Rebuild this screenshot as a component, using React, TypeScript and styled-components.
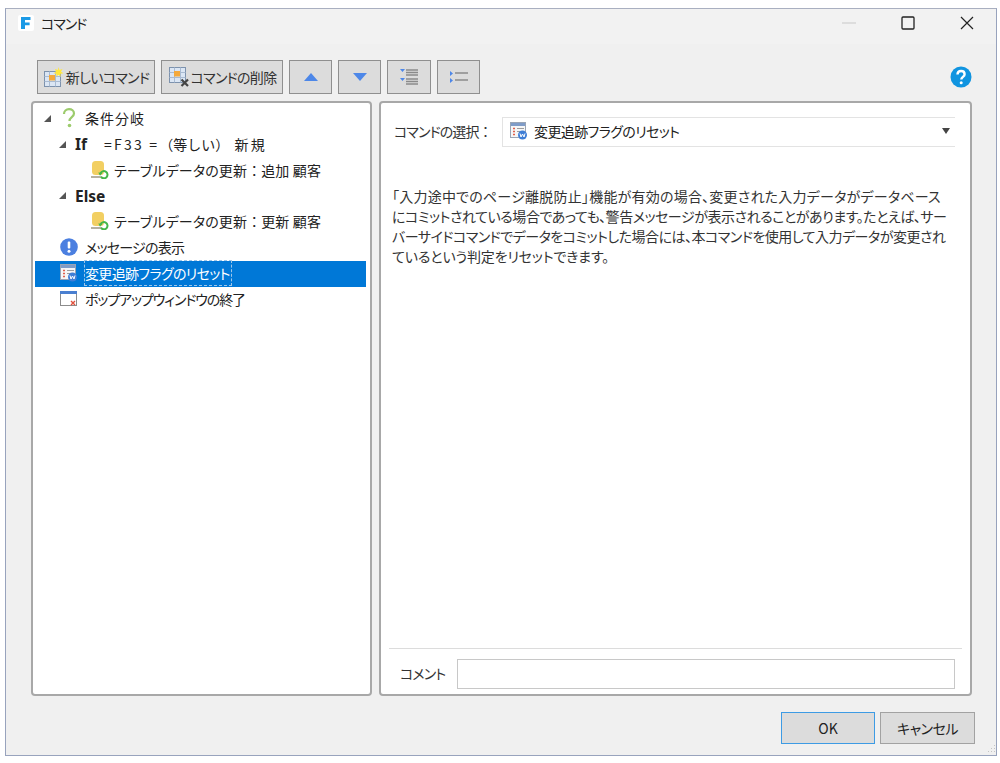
import React from 'react';
import styled, { createGlobalStyle } from 'styled-components';

const GlobalStyle = createGlobalStyle`
  html, body {
    margin: 0;
    padding: 0;
    background: #fff;
    font-family: "Noto Sans CJK JP", "Noto Sans", sans-serif;
    font-size: 14px;
    font-feature-settings: "palt";
    color: #222;
  }
`;

const Page = styled.div`
  width: 1000px;
  height: 763px;
  padding: 8px 3px 7px 5px;
  box-sizing: border-box;
`;

const Window = styled.div`
  height: 100%;
  box-sizing: border-box;
  border: 1px solid #98a3bd;
  border-top-color: #a9afc0;
  background: #f0f0f0;
  display: flex;
  flex-direction: column;
  position: relative;
`;

const TitleBar = styled.div`
  height: 35px;
  flex: none;
  box-sizing: border-box;
  background: #f2f2f2;
  display: flex;
  align-items: center;
  padding: 0 0 7px 12px;
`;

const AppIcon = styled.div`
  width: 16px;
  height: 16px;
  background: #fff;
  border-radius: 2px;
  display: flex;
  align-items: center;
  justify-content: center;
`;

const TitleText = styled.span`
  margin-left: 7px;
  font-size: 14px;
  letter-spacing: -1px;
  color: #222;
`;

const WindowControls = styled.div`
  margin-left: auto;
  display: flex;
  align-items: center;
`;

const ControlBtn = styled.div`
  width: 59px;
  height: 28px;
  display: flex;
  align-items: center;
  justify-content: center;
`;

const Toolbar = styled.div`
  height: 34px;
  margin: 16px 0 0 31px;
  flex: none;
  display: flex;
  align-items: stretch;
  gap: 6px;
  width: 935px;
`;

const ToolBtn = styled.button<{ $w: number }>`
  width: ${p => p.$w}px;
  box-sizing: border-box;
  padding: 0;
  border: 1px solid #8f8f8f;
  background: #dcdcdc;
  font: inherit;
  font-feature-settings: "palt";
  font-size: 14px;
  letter-spacing: -0.7px;
  color: #333;
  display: flex;
  align-items: center;
  justify-content: center;
  gap: 2px;
  white-space: nowrap;
`;

const HelpSlot = styled.div`
  margin-left: auto;
  display: flex;
  align-items: center;
`;

const Panels = styled.div`
  margin: 7px 0 0 25px;
  height: 595px;
  flex: none;
  display: flex;
  gap: 7px;
`;

const Panel = styled.div<{ $w: number }>`
  width: ${p => p.$w}px;
  flex: none;
  box-sizing: border-box;
  background: #fff;
  border: 2px solid #a8a8a8;
  border-radius: 4px;
  display: flex;
  flex-direction: column;
`;

const Tree = styled.div`
  padding: 2.6px 4px 0 2px;
`;

const Row = styled.div<{ $indent: number; $selected?: boolean; $track?: number }>`
  height: 25.9px;
  box-sizing: border-box;
  display: flex;
  align-items: center;
  padding: 0 0 1.5px ${p => p.$indent}px;
  background: ${p => (p.$selected ? '#0078d7' : 'transparent')};
  color: ${p => (p.$selected ? '#fff' : '#222')};
  white-space: nowrap;
  font-size: 14px;
  letter-spacing: ${p => p.$track ?? 0}px;
`;

const Expander = styled.span`
  width: 0;
  height: 0;
  margin: 1px 9px 0 0;
  flex: none;
  border-style: solid;
  border-width: 0 0 7px 7px;
  border-color: transparent transparent #555 transparent;
`;

const RowIcon = styled.span<{ $gap?: number }>`
  width: 18px;
  height: 18px;
  flex: none;
  display: flex;
  align-items: center;
  justify-content: center;
  margin-right: ${p => p.$gap ?? 7}px;
`;

const Bold = styled.b`
  font-family: "Noto Sans", sans-serif;
  font-weight: 700;
  font-size: 15.5px;
  padding-top: 1px;
`;

const IfExpr = styled.span`
  margin-left: 17px;
  padding-top: 1px;
  letter-spacing: 2.2px;
`;

// keeps full-width punctuation, which palt would otherwise squeeze
const WidePunct = styled.span`
  font-feature-settings: normal;
  letter-spacing: 0;
`;

const FocusLabel = styled.span`
  outline: 1px dashed #9fc6e8;
  padding-right: 1px;
  line-height: 24px;
`;

const SelectRow = styled.div`
  margin: 14px 15px 0 13px;
  display: flex;
  align-items: center;
  flex: none;
`;

const FieldLabel = styled.span`
  font-size: 14px;
  letter-spacing: -0.9px;
  color: #333;
  white-space: nowrap;
  padding-bottom: 2px;
`;

const SelectBox = styled.div`
  margin-left: auto;
  width: 453px;
  height: 30px;
  box-sizing: border-box;
  border: 1px solid #e3e3e3;
  border-right: none;
  display: flex;
  align-items: center;
  padding: 0 5px 2px 7px;
  font-size: 14px;
  letter-spacing: -0.6px;
  color: #222;
`;

const Caret = styled.span`
  margin-left: auto;
  width: 0;
  height: 0;
  border-style: solid;
  border-width: 6px 4px 0 4px;
  border-color: #444 transparent transparent transparent;
`;

const Description = styled.div`
  margin: 39px 12px 0 11px;
  flex: 1;
  font-size: 14px;
  line-height: 20px;
  color: #333;
  white-space: nowrap;
`;

const DescLine = styled.div<{ $track: number }>`
  letter-spacing: ${p => p.$track}px;
`;

const CommentRow = styled.div`
  margin: 0 8px 5px 8px;
  height: 41px;
  box-sizing: border-box;
  border-top: 1px solid #dcdcdc;
  padding: 10px 7px 0 11px;
  display: flex;
  align-items: center;
  flex: none;
`;

const CommentInput = styled.div`
  margin-left: auto;
  width: 498px;
  height: 30px;
  box-sizing: border-box;
  border: 1px solid #c8c8c8;
  background: #fff;
`;

const Footer = styled.div`
  margin: 16px 21px 0 0;
  display: flex;
  justify-content: flex-end;
  gap: 5px;
`;

const DialogBtn = styled.button<{ $primary?: boolean }>`
  width: ${p => (p.$primary ? 94 : 95)}px;
  height: 32px;
  box-sizing: border-box;
  padding: 0;
  background: #dcdcdc;
  border: 1px solid ${p => (p.$primary ? '#3d9be4' : '#a2a2a2')};
  font: inherit;
  font-feature-settings: "palt";
  font-size: 14px;
  letter-spacing: ${p => (p.$primary ? 0 : -0.5)}px;
  color: #222;
`;

const Grip = styled.svg`
  position: absolute;
  right: 0;
  bottom: 0;
`;

const Logo = () => (
  <svg width="16" height="16" viewBox="0 0 16 16">
    <path d="M3 2h9.500v3H7v2.400h4.600v2.800H7V14H3z" fill="#1b9ae6" />
  </svg>
);

// table with an orange cell, the base of both command buttons
const TableBase = () => (
  <g>
    <rect x="1.500" y="4.500" width="16" height="15" fill="#dbe6f4" stroke="#7d92ad" />
    <path d="M1.500 9.500h16M1.500 14.500h16M6.500 4.500v15M12.500 4.500v15" stroke="#a9bbd2" />
    <rect x="6" y="8" width="6" height="5.500" fill="#f4a93c" />
  </g>
);

const NewIcon = () => (
  <svg width="21" height="21" viewBox="0 0 21 21">
    <TableBase />
    <path d="M15.500 0l1 3 3-1-1.500 2.700 2.500 1.600-3 .4.100 3-2.200-2-2.200 2 .2-3-3-.4 2.600-1.600L12 2l3 1z" fill="#ffe83c" />
  </svg>
);

const DeleteIcon = () => (
  <svg width="21" height="21" viewBox="0 0 21 21">
    <g transform="translate(0 -4)">
      <TableBase />
    </g>
    <path d="M13.500 12.500l6.500 6.500M20 12.500L13.500 19" stroke="#444" strokeWidth="2.200" />
  </svg>
);

const Triangle = ({ down }: { down?: boolean }) => (
  <svg width="16" height="10" viewBox="0 0 16 10">
    <path d={down ? 'M1 1h14L8 9z' : 'M8 1l7 8H1z'} fill="#4d87e8" />
  </svg>
);

const IndentIcon = () => (
  <svg width="20" height="18" viewBox="0 0 20 18">
    <path d="M1 1h5L3.500 4zM1 10h5l-2.500 3z" fill="#4d87e8" />
    <path d="M7 2h12M7 4.500h12M7 7h12M7 11h12M7 13.500h12M7 16h12" stroke="#8a8a8a" strokeWidth="1.400" />
  </svg>
);

const ListIcon = () => (
  <svg width="20" height="14" viewBox="0 0 20 14">
    <path d="M1 1l3 2.500L1 6zM1 8l3 2.500L1 13z" fill="#4d87e8" />
    <path d="M6 3h13M6 10h13" stroke="#8a8a8a" strokeWidth="1.400" />
  </svg>
);

const HelpIcon = () => (
  <svg width="22" height="22" viewBox="0 0 22 22">
    <circle cx="11" cy="11" r="10.500" fill="#1094e0" />
    <path d="M7.500 8.500c0-2.300 1.600-3.500 3.600-3.500s3.500 1.200 3.500 3.200c0 2.700-3.300 2.700-3.300 5.300" fill="none" stroke="#fff" strokeWidth="2.400" />
    <circle cx="11.200" cy="16.800" r="1.500" fill="#fff" />
  </svg>
);

const QuestionIcon = () => (
  <svg width="14" height="20" viewBox="0 0 14 20">
    <path d="M2 6c0-3 2.200-4.800 5-4.800s5 1.700 5 4.300c0 3.700-4.500 3.700-4.500 7.500" fill="none" stroke="#9ccb6c" strokeWidth="2.200" />
    <circle cx="7.500" cy="17.500" r="1.800" fill="#9ccb6c" />
  </svg>
);

const TableUpdateIcon = () => (
  <svg width="18" height="18" viewBox="0 0 18 18">
    <rect x="1" y="0" width="12" height="14" rx="3.500" fill="#f2cf62" />
    <path d="M0 15h11v2H0z" fill="#b5b0a0" />
    <path d="M9.500 12.500a3.600 3.600 0 1 1 .6 3.500" fill="none" stroke="#45b649" strokeWidth="2" />
    <path d="M7.300 11.500l4.400.3-2.700 3z" fill="#45b649" />
  </svg>
);

const InfoIcon = () => (
  <svg width="18" height="18" viewBox="0 0 18 18">
    <circle cx="9" cy="9" r="8.800" fill="#4b7fe0" />
    <rect x="7.700" y="3.500" width="2.600" height="7" rx="1" fill="#fff" />
    <circle cx="9" cy="13.200" r="1.500" fill="#fff" />
  </svg>
);

const ResetIcon = () => (
  <svg width="18" height="18" viewBox="0 0 18 18">
    <rect x="0.500" y="0.500" width="15" height="15" fill="#f6f6f6" stroke="#9aa5b5" />
    <rect x="1" y="1" width="14" height="3" fill="#7f9cc8" />
    <path d="M3 6.500h2M3 9.500h2M3 12.500h2" stroke="#e0604c" strokeWidth="1.600" />
    <path d="M7 6.500h7M7 9.500h5" stroke="#9d9d9d" />
    <circle cx="12.500" cy="13" r="4.500" fill="#3f7ed6" />
    <path d="M10 11.500l1 3.500 1.500-3 1.500 3 1-3.500" fill="none" stroke="#fff" />
  </svg>
);

const CloseWindowIcon = () => (
  <svg width="18" height="18" viewBox="0 0 18 18">
    <rect x="0.500" y="1.500" width="16" height="14" fill="#fff" stroke="#8c8c8c" />
    <rect x="0" y="1" width="17" height="3" fill="#4a7fd0" />
    <path d="M11 11l4 4M15 11l-4 4" stroke="#e0503c" strokeWidth="1.400" />
  </svg>
);

function App(): JSX.Element {
  return (
    <Page>
      <GlobalStyle />
      <Window>
        <TitleBar>
          <AppIcon>
            <Logo />
          </AppIcon>
          <TitleText>コマンド</TitleText>
          <WindowControls>
            <ControlBtn>
              <svg width="14" height="2" viewBox="0 0 14 2">
                <path d="M0 1h14" stroke="#c8c8c8" />
              </svg>
            </ControlBtn>
            <ControlBtn>
              <svg width="14" height="14" viewBox="0 0 14 14">
                <rect x="1" y="1" width="12" height="12" rx="1" fill="none" stroke="#222" strokeWidth="1.300" />
              </svg>
            </ControlBtn>
            <ControlBtn>
              <svg width="14" height="14" viewBox="0 0 14 14">
                <path d="M1 1l12 12M13 1L1 13" stroke="#222" strokeWidth="1.200" />
              </svg>
            </ControlBtn>
          </WindowControls>
        </TitleBar>

        <Toolbar>
          <ToolBtn $w={118}>
            <NewIcon />
            新しいコマンド
          </ToolBtn>
          <ToolBtn $w={122}>
            <DeleteIcon />
            コマンドの削除
          </ToolBtn>
          <ToolBtn $w={43}>
            <Triangle />
          </ToolBtn>
          <ToolBtn $w={43}>
            <Triangle down />
          </ToolBtn>
          <ToolBtn $w={44}>
            <IndentIcon />
          </ToolBtn>
          <ToolBtn $w={43}>
            <ListIcon />
          </ToolBtn>
          <HelpSlot>
            <HelpIcon />
          </HelpSlot>
        </Toolbar>

        <Panels>
          <Panel $w={341}>
            <Tree>
              <Row $indent={9} $track={1}>
                <Expander />
                <RowIcon>
                  <QuestionIcon />
                </RowIcon>
                条件分岐
              </Row>
              <Row $indent={24}>
                <Expander />
                <Bold>If</Bold>
                <IfExpr>
                  =F33 =<WidePunct>（等しい）</WidePunct> 新規
                </IfExpr>
              </Row>
              <Row $indent={56} $track={0.15}>
                <RowIcon $gap={5}>
                  <TableUpdateIcon />
                </RowIcon>
                テーブルデータの更新<WidePunct>：</WidePunct>追加 顧客
              </Row>
              <Row $indent={24}>
                <Expander />
                <Bold>Else</Bold>
              </Row>
              <Row $indent={56} $track={0.15}>
                <RowIcon $gap={5}>
                  <TableUpdateIcon />
                </RowIcon>
                テーブルデータの更新<WidePunct>：</WidePunct>更新 顧客
              </Row>
              <Row $indent={25} $track={-0.75}>
                <RowIcon>
                  <InfoIcon />
                </RowIcon>
                メッセージの表示
              </Row>
              <Row $indent={25} $selected $track={-0.65}>
                <RowIcon>
                  <ResetIcon />
                </RowIcon>
                <FocusLabel>変更追跡フラグのリセット</FocusLabel>
              </Row>
              <Row $indent={25} $track={-1.1}>
                <RowIcon>
                  <CloseWindowIcon />
                </RowIcon>
                ポップアップウィンドウの終了
              </Row>
            </Tree>
          </Panel>

          <Panel $w={593}>
            <SelectRow>
              <FieldLabel>
                コマンドの選択<WidePunct>：</WidePunct>
              </FieldLabel>
              <SelectBox>
                <RowIcon $gap={6}>
                  <ResetIcon />
                </RowIcon>
                変更追跡フラグのリセット
                <Caret />
              </SelectBox>
            </SelectRow>
            <Description>
              <DescLine $track={0.22}>
                「入力途中でのページ離脱防止」機能が有効の場合、変更された入力データがデータベース
              </DescLine>
              <DescLine $track={-0.45}>
                にコミットされている場合であっても、警告メッセージが表示されることがあります。たとえば、サー
              </DescLine>
              <DescLine $track={-0.5}>
                バーサイドコマンドでデータをコミットした場合には、本コマンドを使用して入力データが変更され
              </DescLine>
              <DescLine $track={-0.15}>ているという判定をリセットできます。</DescLine>
            </Description>
            <CommentRow>
              <FieldLabel>コメント</FieldLabel>
              <CommentInput />
            </CommentRow>
          </Panel>
        </Panels>

        <Footer>
          <DialogBtn $primary>OK</DialogBtn>
          <DialogBtn>キャンセル</DialogBtn>
        </Footer>

        <Grip width="12" height="12" viewBox="0 0 12 12">
          <path d="M10 2h1v1h-1zM7 5h1v1H7zM10 5h1v1h-1zM4 8h1v1H4zM7 8h1v1H7zM10 8h1v1h-1z" fill="#c4c4c4" />
        </Grip>
      </Window>
    </Page>
  );
}

export default App;
